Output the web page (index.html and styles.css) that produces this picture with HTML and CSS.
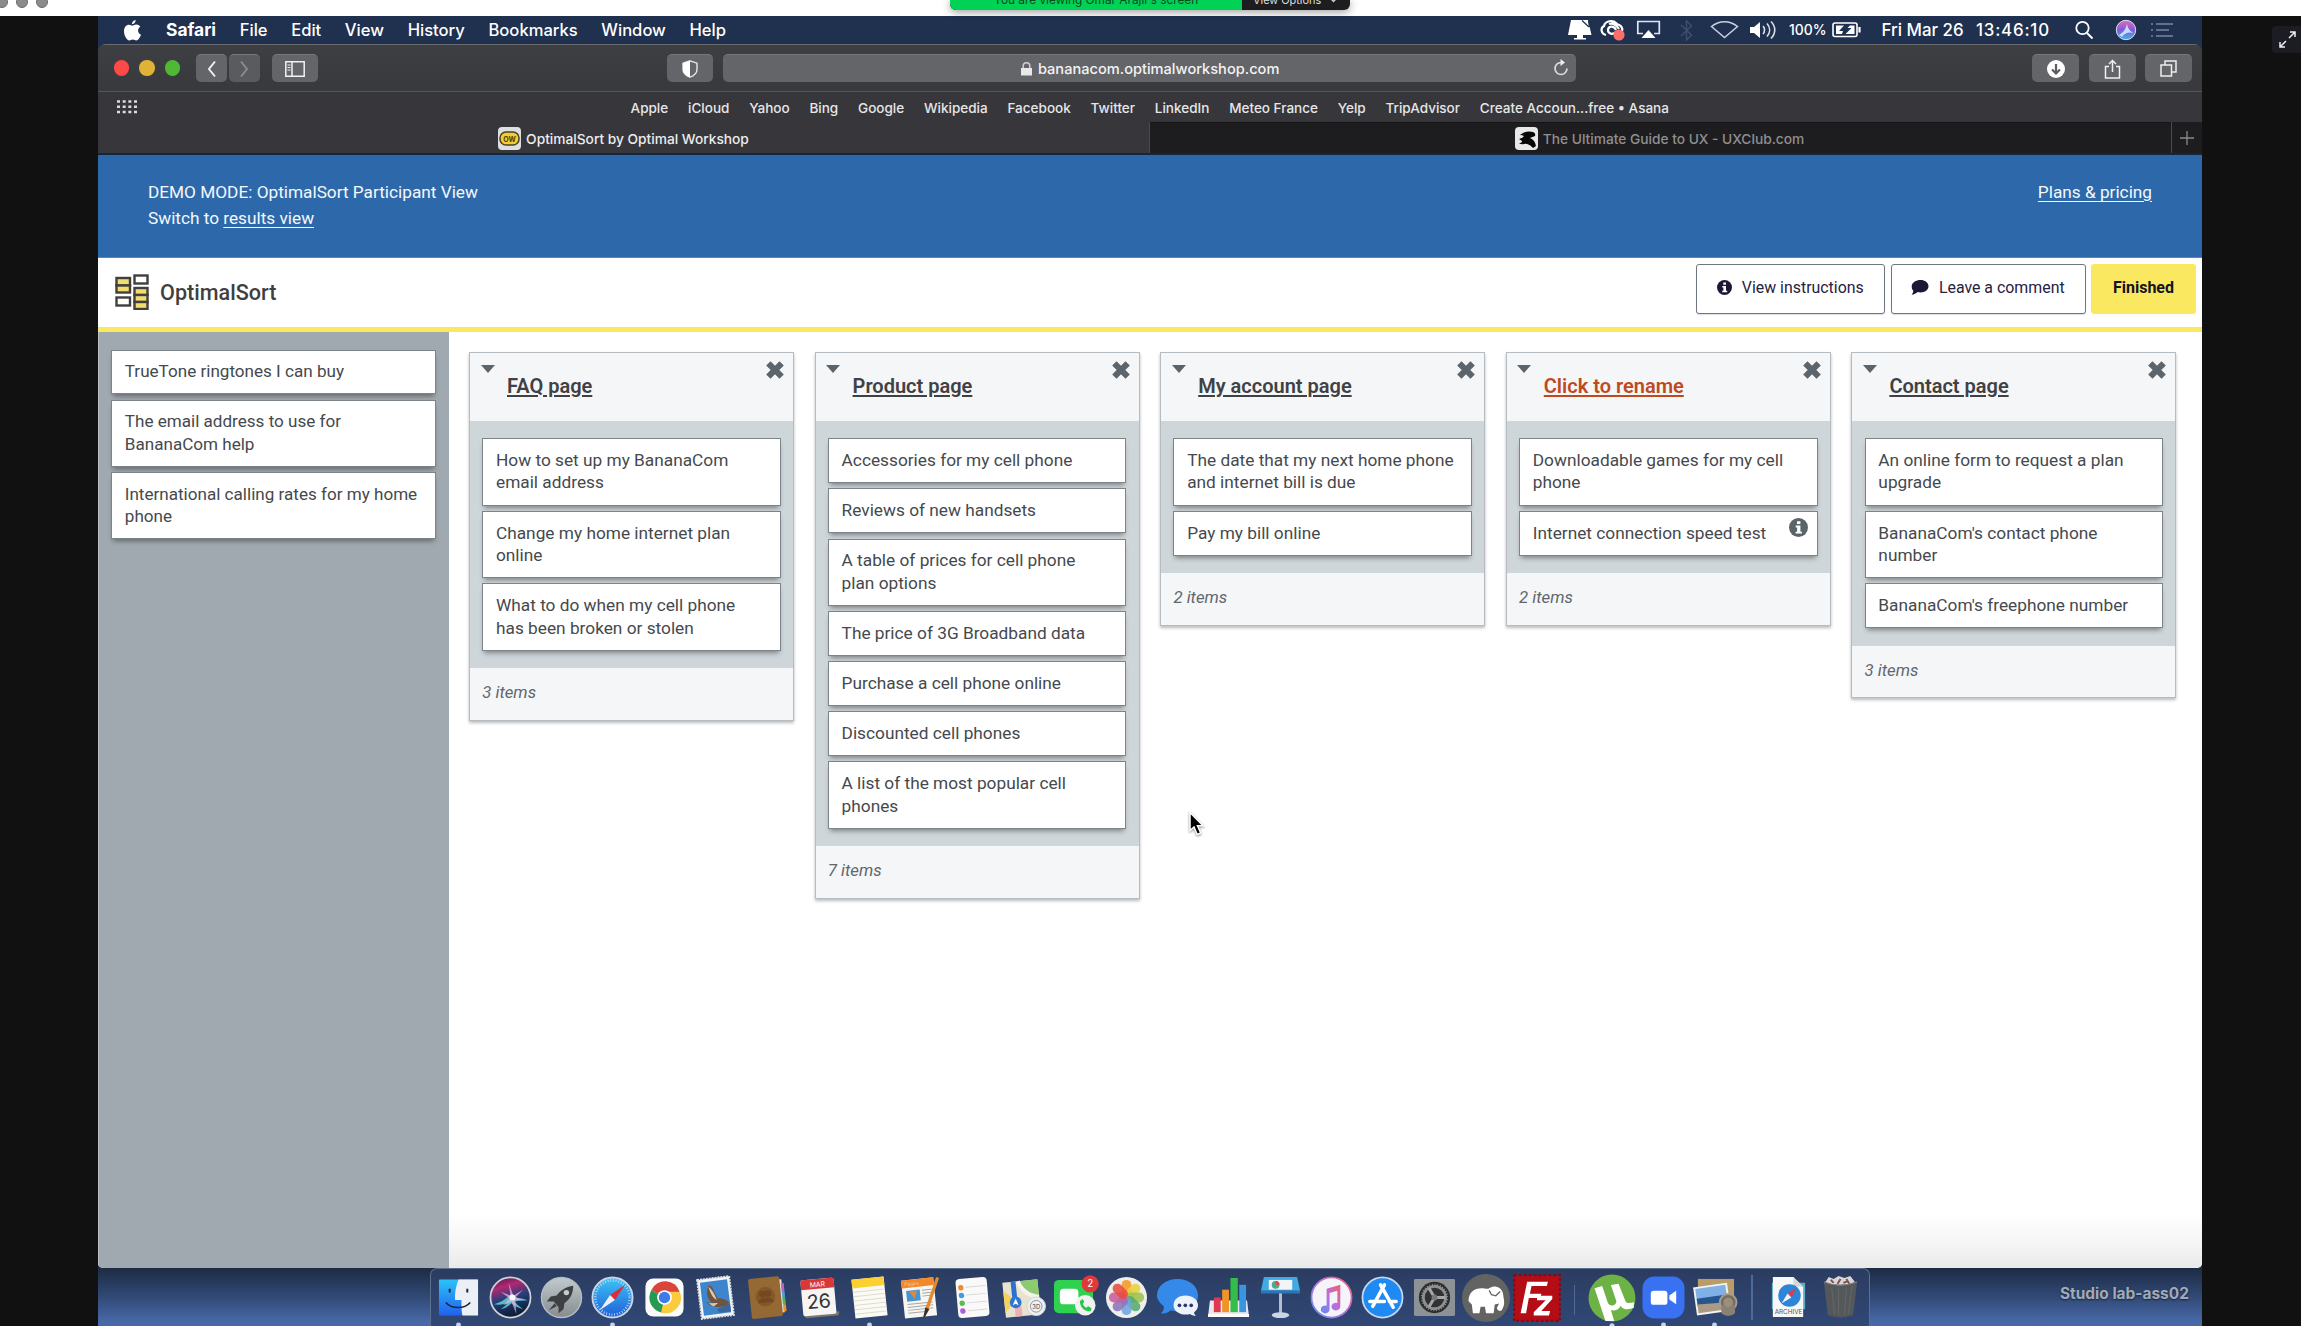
FILE: index.html
```html
<!DOCTYPE html>
<html lang="en">
<head>
<meta charset="utf-8">
<title>OptimalSort by Optimal Workshop</title>
<link rel="stylesheet" href="styles.css">
</head>
<body>
<div class="share-strip">
  <div class="lights"><i></i><i></i><i></i></div>
  <div class="share-pill"><span class="viewing">You are viewing Omar Arajii's screen</span><span class="options">View Options<svg width="9" height="6" viewBox="0 0 9 6"><path d="M1 1l3.500 3.500L8 1" fill="none" stroke="#ccc" stroke-width="1.300"/></svg></span></div>
</div>
<div class="stage">
  <div class="desktop">
    <header class="menubar">
      <svg class="apple" width="17" height="21" viewBox="0 0 17 21"><path d="M11.600 0c.2 2-1.600 4.300-3.700 4.200C7.700 2.300 9.600.200 11.600 0zM8.500 5.700c.8 0 2-1.100 3.900-1.100 1.500 0 3 .8 3.900 2.200-3.300 2-2.700 6.600.7 7.900-.8 2.300-2.800 5.700-4.700 5.700-1.300 0-1.800-.8-3.500-.8s-2.200.8-3.500.8C2.600 20.400 0 15.400 0 11.300c0-4 2.300-6.500 4.900-6.500 1.700 0 2.700.9 3.600.9z" fill="#fff"/></svg>
      <nav class="menus"><b>Safari</b><span>File</span><span>Edit</span><span>View</span><span>History</span><span>Bookmarks</span><span>Window</span><span>Help</span></nav>
      <div class="status">
        <svg width="606" height="28" viewBox="1568 16 606 28" fill="none" stroke="#fff">
          <path d="M1571 20h17l3.500 15h-23.500z" fill="#fff" stroke="none"/><path d="M1582 20.500l7 6.500M1588.500 20.500l1 6.500" stroke="#213050" stroke-width="1.200"/><path d="M1577 35h6v3h3v1.500h-12V38h3z" fill="#fff" stroke="none"/>
          <path d="M1606 35c-5-1-6-7-2-9 1-5 9-7 13-2 4 1 6 4 5 7M1616 30c-2-5-8-4-8 0 0 4 5 5 8 2M1609 24c5-2 8 2 10 5" stroke-width="2.200"/><circle cx="1619" cy="35" r="5.600" fill="#fb6f69" stroke="none"/>
          <path d="M1643 33.500h-5.200V21.500h21.500v12h-5.200" stroke="#e2e6ee" stroke-width="1.700"/><path d="M1648.500 30l7 8h-14z" fill="#fff" stroke="none"/>
          <path d="M1681 25l10.500 10-5 5V21l5 5-10.500 10" stroke="#3f4f72" stroke-width="1.400"/>
          <path d="M1711.500 26.500c7.500-6.500 18.500-6.500 26 0L1724.500 37.500z" stroke="#c8d0df" stroke-width="1.500"/>
          <path d="M1750 27h4l6-5v16l-6-5h-4z" fill="#fff" stroke="none"/><path d="M1763 26c2 2 2 6 0 8M1767 23.500c3.500 4 3.500 9 0 13M1771 21.500c5 5 5 12 0 17" stroke="#dbe0ea" stroke-width="1.600"/>
          <text x="1789" y="34.500" class="menu-text pct">100%</text>
          <rect x="1833" y="23" width="24" height="13.500" rx="2" stroke-width="1.600"/><path d="M1859.500 27v5.500" stroke-width="2.200"/><path d="M1836 25.500h8l-5 5.500h4l-1 3h-6zM1850 25.500h4.500v8.500h-9l6-6h-4z" fill="#fff" stroke="none"/>
          <text x="1881.500" y="36" class="menu-text day">Fri Mar 26</text><text x="1976" y="36" class="menu-text clock">13:46:10</text>
          <circle cx="2082.500" cy="28" r="6.200" stroke-width="1.800"/><path d="M2087 33l5.500 5.500" stroke-width="2"/>
          <circle cx="2126" cy="30" r="9.700" fill="url(#siriSmall)" stroke="#d9dff0" stroke-width="1"/><path d="M2119 35q6-3 8-11 1 6 6 9-7-2-11 4" fill="#cfe9ff" stroke="none" opacity=".9"/>
          <path d="M2151 24h2M2156 24h17M2151 30h2M2156 30h13M2151 36h2M2156 36h17" stroke="#61708f" stroke-width="2"/>
          <defs><linearGradient id="siriSmall" x1="0" y1="0" x2="0" y2="1"><stop stop-color="#e26bb5"/><stop offset=".5" stop-color="#7f5ce0"/><stop offset="1" stop-color="#3fb4e4"/></linearGradient></defs>
        </svg>
      </div>
    </header>

    <section class="window">
      <div class="toolbar">
        <div class="traffic"><i class="red"></i><i class="amber"></i><i class="green"></i></div>
        <div class="tool nav-btn"><svg width="10" height="18" viewBox="0 0 10 18"><path d="M8 1.500L2 9l6 7.500" fill="none" stroke="#eee" stroke-width="2"/></svg></div>
        <div class="tool nav-btn fwd"><svg width="10" height="18" viewBox="0 0 10 18"><path d="M2 1.500L8 9l-6 7.500" fill="none" stroke="#8d8e91" stroke-width="1.800"/></svg></div>
        <div class="tool side-btn"><svg width="20" height="16" viewBox="0 0 20 16" fill="none" stroke="#f2f2f2" stroke-width="1.500"><path d="M.8.800h18.400v14.400H.800zM7 1v14"/><path d="M2.500 4h3M2.500 6.500h3M2.500 9h3" stroke-width="1"/></svg></div>
        <div class="tool shield"><svg width="16" height="18" viewBox="0 0 16 18"><path d="M8 .800l7 2.400v6c0 4-3 6.500-7 8-4-1.500-7-4-7-8v-6z" fill="none" stroke="#e8e8e8" stroke-width="1.400"/><path d="M8 .8v16.400C4 15.700 1 13.200 1 9.200v-6z" fill="#fff"/></svg></div>
        <div class="tool address"><span class="url"><svg width="11" height="14" viewBox="0 0 11 14"><path d="M0 6h11v7.500H0z" fill="#e8e8ea"/><path d="M2.200 6V4a3.300 3.300 0 016.600 0v2" fill="none" stroke="#d0d0d3" stroke-width="1.500"/></svg>bananacom.optimalworkshop.com</span>
          <svg class="reload" width="16" height="18" viewBox="0 0 16 18"><path d="M8 3.500A6 6 0 1014 9.500" fill="none" stroke="#dcdcde" stroke-width="1.700"/><path d="M7.500 0l4.500 3.500L7.500 7z" fill="#eee"/></svg></div>
        <div class="tool act"><svg width="18" height="18" viewBox="0 0 18 18"><circle cx="9" cy="9" r="9" fill="#fff"/><path d="M9 4v9M5 9.500l4 4 4-4" fill="none" stroke="#5b5c60" stroke-width="2.200"/></svg></div>
        <div class="tool act"><svg width="17" height="20" viewBox="0 0 17 20" fill="none" stroke="#f0f0f0" stroke-width="1.500"><path d="M5 7.500H1.500V19h14V7.500H12M8.500 13V1.500M5 5l3.500-3.500L12 5"/></svg></div>
        <div class="tool act"><svg width="17" height="17" viewBox="0 0 17 17" fill="none" stroke="#eee" stroke-width="1.500"><path d="M1 5h10.500v11H1zM5 5V1h11v11h-4.500"/></svg></div>
      </div>
      <div class="favorites">
        <svg class="grid-icon" width="20" height="14" viewBox="0 0 20 14"><path d="M0 1.500h20M0 6.700h20M0 12h20" stroke="#ddd" stroke-width="2.600" stroke-dasharray="3 2.670"/></svg>
        <nav><span>Apple</span><span>iCloud</span><span>Yahoo</span><span>Bing</span><span>Google</span><span>Wikipedia</span><span>Facebook</span><span>Twitter</span><span>LinkedIn</span><span>Meteo France</span><span>Yelp</span><span>TripAdvisor</span><span>Create Accoun...free • Asana</span></nav>
      </div>
      <div class="tabs">
        <div class="tab active"><svg width="23" height="23" viewBox="0 0 23 23"><rect width="23" height="23" rx="4" fill="#dedfe0"/><rect x="2" y="5" width="19" height="13" rx="6" fill="#f3cd35" stroke="#4a4220" stroke-width="1.500"/><text x="11.500" y="14.500" text-anchor="middle" class="ow">OW</text></svg>OptimalSort by Optimal Workshop</div>
        <div class="tab"><svg width="23" height="23" viewBox="0 0 23 23"><rect width="23" height="23" rx="4" fill="#e8e8e8"/><path d="M5 8q6-5 13-3 3 1 2 4l-5 2q5 2 6 8l-3 2q-5-5-9-4-3 1-5-1 3 0 3-2l-3-2q4-1 5-3-2-1-4-1z" fill="#050505"/></svg>The Ultimate Guide to UX - UXClub.com</div>
        <div class="plus"><svg width="14" height="14" viewBox="0 0 14 14"><path d="M7 0v14M0 7h14" stroke="#8a8a8c" stroke-width="1.300"/></svg></div>
      </div>

      <div class="page">
        <div class="demo">
          <div>DEMO MODE: OptimalSort Participant View<br>Switch to <a>results view</a></div>
          <a class="plans">Plans &amp; pricing</a>
        </div>
        <div class="brandbar">
          <svg width="34" height="36" viewBox="0 0 34 36" fill="#fff" stroke="#413f3e" stroke-width="2.400"><rect x="1.500" y="4" width="13.500" height="7.500" fill="#f3dc6e"/><rect x="1.500" y="11.500" width="13.500" height="7" fill="#f3dc6e"/><rect x="1.500" y="23.500" width="13.500" height="8"/><rect x="19.500" y="1.500" width="13" height="8"/><rect x="19.500" y="14" width="13" height="7" fill="#f3dc6e"/><rect x="19.500" y="21" width="13" height="7" fill="#f3dc6e"/><rect x="19.500" y="28" width="13" height="7" fill="#f3dc6e"/></svg>
          <h1>OptimalSort</h1>
          <button class="btn instructions"><svg width="15" height="15" viewBox="0 0 15 15"><circle cx="7.500" cy="7.500" r="7.500" fill="#1b1735"/><path d="M6.300 2.500h2.700v2.200H6.300zM5.300 6h3.700v4.800h1.200v1.500H5.200v-1.500h1.200V7.500H5.300z" fill="#fff"/></svg>View instructions</button>
          <button class="btn comment"><svg width="18" height="15" viewBox="0 0 18 15"><path d="M9.500 0C14 0 17.500 2.700 17.500 6.300S14 12.500 9.500 12.500c-1 0-2-.1-2.800-.4C5 13.700 3 14.600.5 14.700c1-1 1.700-2.300 1.800-4C1 9.500.7 8 .7 6.300.7 2.700 5 0 9.500 0z" fill="#1b1735"/></svg>Leave a comment</button>
          <button class="btn finished">Finished</button>
        </div>
        <div class="workspace">
          <aside class="cards">
            <div class="card">TrueTone ringtones I can buy</div>
            <div class="card">The email address to use for<br>BananaCom help</div>
            <div class="card">International calling rates for my home<br>phone</div>
          </aside>
          <main class="board">
            <section class="group">
              <header><i class="tri"></i><h2>FAQ page</h2><svg class="close" width="20" height="20" viewBox="0 0 18 18"><path d="M3 3l12 12M15 3L3 15"/></svg></header>
              <div class="cards"><div class="card">How to set up my BananaCom<br>email address</div><div class="card">Change my home internet plan<br>online</div><div class="card">What to do when my cell phone<br>has been broken or stolen</div></div>
              <footer>3 items</footer>
            </section>
            <section class="group">
              <header><i class="tri"></i><h2>Product page</h2><svg class="close" width="20" height="20" viewBox="0 0 18 18"><path d="M3 3l12 12M15 3L3 15"/></svg></header>
              <div class="cards"><div class="card">Accessories for my cell phone</div><div class="card">Reviews of new handsets</div><div class="card">A table of prices for cell phone<br>plan options</div><div class="card">The price of 3G Broadband data</div><div class="card">Purchase a cell phone online</div><div class="card">Discounted cell phones</div><div class="card">A list of the most popular cell<br>phones</div></div>
              <footer>7 items</footer>
            </section>
            <section class="group">
              <header><i class="tri"></i><h2>My account page</h2><svg class="close" width="20" height="20" viewBox="0 0 18 18"><path d="M3 3l12 12M15 3L3 15"/></svg></header>
              <div class="cards"><div class="card">The date that my next home phone<br>and internet bill is due</div><div class="card">Pay my bill online</div></div>
              <footer>2 items</footer>
            </section>
            <section class="group">
              <header><i class="tri"></i><h2 class="rename">Click to rename</h2><svg class="close" width="20" height="20" viewBox="0 0 18 18"><path d="M3 3l12 12M15 3L3 15"/></svg></header>
              <div class="cards"><div class="card">Downloadable games for my cell<br>phone</div><div class="card has-info">Internet connection speed test<svg width="19" height="19" viewBox="0 0 15 15"><circle cx="7.500" cy="7.500" r="7.500" fill="#5b6469"/><path d="M6.300 2.500h2.700v2.200H6.300zM5.300 6h3.700v4.800h1.200v1.500H5.200v-1.500h1.200V7.500H5.300z" fill="#fff"/></svg></div></div>
              <footer>2 items</footer>
            </section>
            <section class="group">
              <header><i class="tri"></i><h2>Contact page</h2><svg class="close" width="20" height="20" viewBox="0 0 18 18"><path d="M3 3l12 12M15 3L3 15"/></svg></header>
              <div class="cards"><div class="card">An online form to request a plan<br>upgrade</div><div class="card">BananaCom's contact phone<br>number</div><div class="card">BananaCom's freephone number</div></div>
              <footer>3 items</footer>
            </section>
          </main>
        </div>
      </div>
    </section>

    <div class="dock-area">
      <div class="dock">
        <!-- Finder -->
        <svg viewBox="0 0 44 44"><defs><linearGradient id="fd" x1="0" y1="0" x2="0" y2="1"><stop stop-color="#2cc3f8"/><stop offset="1" stop-color="#2160ef"/></linearGradient></defs><rect x="2" y="3.500" width="40" height="37" rx="1" fill="url(#fd)"/><path d="M22 3.500c-3 8-4 14-3.500 21H25c0 6 0 11 1 16h16v-37z" fill="#eceff6"/><path d="M13 13v4M31 13v4" stroke="#16243a" stroke-width="2"/><path d="M9 27c6 7 19 7 25 0" fill="none" stroke="#16243a" stroke-width="1.600"/><circle class="dot" cx="22" cy="50" r="2.500"/></svg>
        <!-- Siri -->
        <svg viewBox="0 0 44 44"><defs><linearGradient id="si" x1="0" y1="0" x2=".3" y2="1"><stop stop-color="#3b1a4d"/><stop offset=".3" stop-color="#b32773"/><stop offset=".6" stop-color="#243f7a"/><stop offset="1" stop-color="#0e1e3a"/></linearGradient></defs><circle cx="22" cy="22" r="20.500" fill="url(#si)" stroke="#cfd0d8" stroke-width="1.800"/><path d="M5 29q10-3 16-9l2-2q5 6 17 7-12 0-14 1 3 4 9 8-8-2-12-6-5 5-11 6 5-3 7-6-7 2-14 1z" fill="#5fd5d0" opacity=".85"/><path d="M20 7l5 13 10-6-8 8 12 2-12 1 1 14-5-13-8 4 6-7-9-7 10 4z" fill="#f0b4e4" opacity=".7"/><circle cx="24" cy="22" r="3" fill="#fff" opacity=".9"/></svg>
        <!-- Launchpad -->
        <svg viewBox="0 0 44 44"><defs><linearGradient id="lp" x1="0" y1="0" x2="0" y2="1"><stop stop-color="#c2cbcf"/><stop offset="1" stop-color="#868b8e"/></linearGradient></defs><circle cx="22" cy="22" r="20.500" fill="url(#lp)" stroke="#b4bcc0" stroke-width="1.500"/><path d="M34 10c-8 1-13 5-17 10l-6 1-4 5 7 0 5 6 0 6 5-4 1-6c5-4 9-9 9-18z" fill="#3d4144"/><path d="M15 28l-6 7 8-4z" fill="#3d4144"/><circle cx="27" cy="17" r="2.800" fill="#c5ccd0"/></svg>
        <!-- Safari -->
        <svg viewBox="0 0 44 44"><defs><linearGradient id="sf" x1="0" y1="0" x2="0" y2="1"><stop stop-color="#3dc4f6"/><stop offset="1" stop-color="#1f5fd8"/></linearGradient></defs><circle cx="22" cy="22" r="20.500" fill="url(#sf)" stroke="#c9d4e4" stroke-width="2"/><circle cx="22" cy="22" r="17.500" fill="none" stroke="#cfe6fb" stroke-width="2.500" stroke-dasharray=".8 1.950"/><path d="M35 9L24.500 24.500l-5-5z" fill="#dc2e3a"/><path d="M9 35l10.500-15.500 5 5z" fill="#edf0f3"/><circle class="dot" cx="22" cy="50" r="2.500"/></svg>
        <!-- Chrome -->
        <svg viewBox="0 0 44 44"><rect x="2.500" y="2.500" width="39" height="39" rx="8" fill="#fbfbfb"/><path d="M22 22L8.600 14.200A15.600 15.600 0 0137.500 16z" fill="#d9453a"/><path d="M22 22l-13.400-7.800A15.600 15.600 0 0020 37.500z" fill="#259a50"/><path d="M22 22l-3.500 15.300A15.600 15.600 0 0037.500 16H22z" fill="#fbcb3e"/><circle cx="22" cy="22" r="7.500" fill="#fff"/><circle cx="22" cy="22" r="5.800" fill="#3e7bea"/></svg>
        <!-- Mail -->
        <svg viewBox="0 0 44 44"><g transform="rotate(-7 22 22)"><rect x="5.500" y="2" width="33" height="40" fill="#f2f4f6" stroke="#dce2e8" stroke-width="2" stroke-dasharray="2 1"/><rect x="8" y="5" width="28" height="34" fill="#3d86cd"/><path d="M16 9q4 0 5 6l3 8q6 0 12 6l-3 1q3 3 3 5l-7-3q-6 1-12-2-3-1-5-4l6 1q-5-5-4-12z" fill="#6f5440"/><path d="M16 10q5 5 7 15-5-3-7-15zM14 27l10 1-5 3z" fill="#dcc8a8"/><path d="M22 34l14-4v8H24z" fill="#3a659f"/></g></svg>
        <!-- Contacts -->
        <svg viewBox="0 0 44 44"><g transform="rotate(-6 22 22)"><path d="M36 5h3v34h-3z" fill="#e8e5df"/><path d="M38 9h3v8h-3z" fill="#b66ac4"/><path d="M38 17h3v7h-3z" fill="#4f9fe2"/><path d="M38 24h3v7h-3z" fill="#53b74c"/><path d="M38 31h3v7h-3z" fill="#f0952e"/><rect x="5" y="1.500" width="32" height="41" rx="2" fill="#956933"/><circle cx="21" cy="21" r="10" fill="#84592a"/><circle cx="18" cy="18" r="3.500" fill="#74491f"/><circle cx="24" cy="18" r="3.500" fill="#74491f"/><path d="M13 27q1-5 8-5t8 5z" fill="#74491f"/></g></svg>
        <!-- Calendar -->
        <svg viewBox="0 0 44 44"><g transform="rotate(-5 22 22)"><path d="M5 39l3 3h33l1-4z" fill="#7c766d"/><rect x="5" y="3" width="34" height="37" rx="2" fill="#f6f5f3"/><path d="M5 5q0-2 2-2h30q2 0 2 2v8H5z" fill="#da3838"/><text x="22" y="11" class="mar">MAR</text><text x="22" y="33" class="date">26</text></g></svg>
        <!-- Notes -->
        <svg viewBox="0 0 44 44"><g transform="rotate(-6 22 22)"><rect x="5.500" y="2" width="33" height="40" fill="#fbfaf3"/><rect x="5.500" y="2" width="33" height="9" fill="#fdd031"/><path d="M6 15h32M6 19.500h32M6 24h32M6 28.500h32M6 33h32M6 37.500h32" stroke="#d5d4cd" stroke-width=".8"/></g><circle class="dot" cx="22" cy="50" r="2.500"/></svg>
        <!-- Pages -->
        <svg viewBox="0 0 44 44"><g transform="rotate(-6 20 22)"><rect x="4" y="3" width="33" height="39" fill="#f7f6f2"/><rect x="4" y="3" width="33" height="8" fill="#f2892b"/><text x="7" y="9" class="tiny">Pages</text><rect x="8" y="14" width="14" height="11" fill="#4495d2"/><path d="M11 15h8l-3 8z" fill="#e88532"/><path d="M24 15h10M24 18h10M24 21h10M8 28h26M8 31h26M8 34h26M8 37h20" stroke="#a6a6a4"/></g><path d="M38 1l3 1-11 33-4 7-1-1 2-8z" fill="#e28b31"/><path d="M27 32l4 2-5 9-1-1z" fill="#333"/></svg>
        <!-- Reminders -->
        <svg viewBox="0 0 44 44"><g transform="rotate(-5 22 22)"><rect x="6" y="2" width="32" height="40" rx="4" fill="#f9f9fa"/><path d="M16 11h20M16 19h20M16 27h20M16 35h20" stroke="#d8d8dc"/><circle cx="11" cy="11" r="2.800" fill="#f08a2c"/><circle cx="11" cy="19" r="2.800" fill="#3c9de9"/><circle cx="11" cy="27" r="2.800" fill="#63b951"/><circle cx="11" cy="35" r="2.800" fill="#b45bd8"/></g></svg>
        <!-- Maps -->
        <svg viewBox="0 0 44 44"><g transform="rotate(-6 20 22)"><rect x="2" y="5" width="36" height="36" fill="#e7e3cf"/><path d="M16 5h22v22z" fill="#8ccb6f"/><path d="M2 14l12 10-12 12z" fill="#f4d35f"/><path d="M18 5q4 15 20 18" fill="none" stroke="#f5f3ec" stroke-width="4"/><path d="M13 5v22" stroke="#2c71ce" stroke-width="5"/><rect x="12" y="31" width="7" height="10" fill="#efb0b5"/></g><circle cx="14" cy="27" r="6" fill="#2e76d4"/><path d="M14 23l3 7-3-1.500L11 30z" fill="#fff"/><circle cx="35" cy="31" r="9.500" fill="#eef0f2" stroke="#cfd3d8"/><circle cx="35" cy="31" r="6" fill="none" stroke="#8d959e"/><text x="35" y="33.500" class="td">3D</text></svg>
        <!-- FaceTime -->
        <svg viewBox="0 0 44 44"><rect x="1" y="4" width="40" height="34" rx="5" fill="#2fd150"/><rect x="7" y="13" width="19" height="16" rx="4" fill="#fff"/><circle cx="33" cy="30" r="10.500" fill="#f0f2f2"/><path d="M27.500 25.500c0 7 5 11 11 10.500l1-3-3.500-2-2 1.500c-2-1-3-2.500-3.500-4l1.500-2-1.500-3z" fill="#28c64a"/><circle cx="38" cy="8" r="8.800" fill="#e0383b"/><text x="38" y="11.500" class="badge">2</text></svg>
        <!-- Photos -->
        <svg viewBox="0 0 44 44"><circle cx="22" cy="22" r="21" fill="#eeeeea"/><g transform="translate(22 22)"><rect x="-5" y="-18" width="10" height="18" rx="5" fill="#f59a2b" opacity=".9"/><rect x="-5" y="-18" width="10" height="18" rx="5" fill="#e6d33c" opacity=".88" transform="rotate(45)"/><rect x="-5" y="-18" width="10" height="18" rx="5" fill="#9dc24d" opacity=".88" transform="rotate(90)"/><rect x="-5" y="-18" width="10" height="18" rx="5" fill="#58aa72" opacity=".88" transform="rotate(135)"/><rect x="-5" y="-18" width="10" height="18" rx="5" fill="#71a5dd" opacity=".88" transform="rotate(180)"/><rect x="-5" y="-18" width="10" height="18" rx="5" fill="#8b75bf" opacity=".88" transform="rotate(225)"/><rect x="-5" y="-18" width="10" height="18" rx="5" fill="#c85d99" opacity=".88" transform="rotate(270)"/><rect x="-5" y="-18" width="10" height="18" rx="5" fill="#e84b3f" opacity=".88" transform="rotate(315)"/></g></svg>
        <!-- Messages -->
        <svg viewBox="0 0 44 44"><path d="M22 3c12 0 21 7 21 17S34 36 22 36c-3 0-5 0-7-1-3 3-7 4-10 3 3-2 3-4 3-7-4-3-7-7-7-11C1 10 10 3 22 3z" fill="#3489e9"/><path d="M30 20c7 0 13 4 13 10 0 3-2 6-4 7 0 2 1 3 2 4-3 0-5-1-6-2-9 2-17-2-17-9 0-6 5-10 12-10z" fill="#eef3fb"/><circle cx="24" cy="30" r="1.900" fill="#2c3b69"/><circle cx="30" cy="30" r="1.900" fill="#2c3b69"/><circle cx="36" cy="30" r="1.900" fill="#2c3b69"/></svg>
        <!-- Numbers -->
        <svg viewBox="0 0 44 44"><path d="M3 25h38l2 17H1z" fill="#e9e9ec"/><rect x="7" y="22" width="7" height="15" fill="#df3852"/><rect x="15.500" y="14" width="7" height="23" fill="#f09328"/><rect x="24" y="2" width="7.500" height="35" fill="#34bd4a"/><rect x="33" y="9" width="7" height="28" fill="#3a95e1"/><path d="M1 39h42v3H1z" fill="#fbfbfb"/></svg>
        <!-- Keynote -->
        <svg viewBox="0 0 44 44"><path d="M20.500 17h3v23h-3z" fill="#b5c3d1"/><ellipse cx="22" cy="40" rx="9" ry="3" fill="#c9d7e2"/><path d="M5 1h34l3 14H2z" fill="#43a9e4"/><path d="M2 15h40v3H2z" fill="#2a76b7"/><rect x="10" y="4" width="24" height="10" fill="#f1f5f7"/><circle cx="17" cy="9" r="4" fill="#4aa893"/><path d="M17 9V5a4 4 0 014 4z" fill="#db4b48"/></svg>
        <!-- iTunes -->
        <svg viewBox="0 0 44 44"><defs><linearGradient id="it" x1="0" y1="1" x2="1" y2="0"><stop stop-color="#5a8ff0"/><stop offset=".5" stop-color="#b86fe0"/><stop offset="1" stop-color="#f1606f"/></linearGradient></defs><circle cx="22" cy="22" r="20.500" fill="#f5f4f8" stroke="url(#it)" stroke-width="1.800"/><path d="M17 13l14-4v22a4.500 4 0 11-3-3.500V15l-8 2.500V34a4.500 4 0 11-3-3.500z" fill="url(#it)"/></svg>
        <!-- App Store -->
        <svg viewBox="0 0 44 44"><circle cx="22" cy="22" r="20.500" fill="#1f8af2" stroke="#c4d8f0" stroke-width="1.800"/><path d="M24 9L12 31M20 9l13 23M9 26h15M29 26h7" stroke="#fff" stroke-width="3.600" stroke-linecap="round"/></svg>
        <!-- System Preferences -->
        <svg viewBox="0 0 44 44"><rect x="1" y="3" width="42" height="38" rx="1.500" fill="#8c9296"/><circle cx="22" cy="22" r="16" fill="#2f3133"/><circle cx="22" cy="22" r="14" fill="#8f9091" stroke="#2b2c2d" stroke-width="2.500" stroke-dasharray="1.800 1.100"/><circle cx="22" cy="22" r="10" fill="#303234"/><path d="M22 22h11M22 22l-5.500-9.500M22 22l-5.500 9.500" stroke="#a6a7a8" stroke-width="3"/><circle cx="22" cy="22" r="3" fill="#77797b"/></svg>
        <!-- MAMP -->
        <svg viewBox="0 0 44 44" class="big"><circle cx="22" cy="22" r="22" fill="#636363"/><path d="M6 25c0-8 5-12 12-12 3 0 5 1 7 0 6-4 13 0 13 8 1 4 1 8-1 11-1 3-5 2-5-1l2-4-4 1-1 8h-7l-1-6h-4l-1 6h-6l-1-8-2-2z" fill="#fff"/><path d="M25 15l2 4 4 1 4-4" fill="none" stroke="#636363" stroke-width="1.200"/></svg>
        <!-- FileZilla -->
        <svg viewBox="0 0 44 44" class="big"><rect x="1" y="1" width="42" height="42" fill="#b40d16" stroke="#850a12" stroke-width="2" stroke-dasharray="2.500 2"/><path d="M13 7h19l-1 4H17l-1.500 7H26l-1 4H14.500L12 36H7z" fill="#fff"/><path d="M22 20h14v3L26 34h8l-1 4H19v-3l11-11h-8z" fill="#fff"/></svg>
        <i class="divider"></i>
        <!-- uTorrent -->
        <svg viewBox="0 0 44 44" class="big"><circle cx="22" cy="22" r="21.500" fill="#6db244"/><path d="M6 13l7-2 5 15c2 5 8 3 8-1l-5-15 7-1 6 15c1 3 3 3 8 2v5c-5 2-10 2-12-2-2 4-6 5-9 4l3 10h-8z" fill="#fff"/><circle class="dot" cx="22" cy="47.500" r="2.300"/></svg>
        <!-- Zoom -->
        <svg viewBox="0 0 44 44"><rect x=".500" y=".500" width="43" height="43" rx="12" fill="#3871f2"/><rect x="9" y="15" width="17" height="14.500" rx="3" fill="#fff"/><path d="M28 20l7-5v14l-7-5z" fill="#fff"/><circle class="dot" cx="22" cy="50" r="2.500"/></svg>
        <!-- Preview -->
        <svg viewBox="0 0 44 44"><rect x="5" y="3" width="37" height="30" fill="#b99d69"/><g transform="rotate(-8 20 24)"><rect x="2" y="9" width="35" height="29" fill="#f2f2ee"/><rect x="4" y="11" width="31" height="12" fill="#7fb1e8"/><rect x="4" y="21" width="31" height="8" fill="#27568d"/><path d="M4 27l31 2v7H4z" fill="#ab9a85"/></g><circle cx="36" cy="27" r="8.500" fill="#756c62" stroke="#a29c92" stroke-width="2"/><path d="M29 30h14v8q-7 6-14 0z" fill="#8b8172"/><circle cx="36" cy="27" r="5" fill="#9a8f7b"/><circle class="dot" cx="22" cy="50" r="2.500"/></svg>
        <i class="divider tall"></i>
        <!-- Archive -->
        <svg viewBox="0 0 44 44"><path d="M5 7h34v27H5z" fill="#5caec9"/><path d="M6 1h21l10 10v31H6z" fill="#f7f7f7"/><path d="M27 1v10h10z" fill="#d4d7da"/><circle cx="23" cy="20" r="11.500" fill="#2c84db"/><path d="M30 12l-5 10-4-4z" fill="#e23c3c"/><path d="M15 28l6-10 4 4z" fill="#f2f2f2"/><text x="22" y="39" class="arch">ARCHIVE</text></svg>
        <!-- Trash -->
        <svg viewBox="0 0 44 44"><path d="M6 7l4-6 5 2 5-3 6 2 6-2 4 5 2 5-15 3z" fill="#d8d6d6"/><path d="M12 4l3 3M22 3l-3 5M28 3l3 5M25 7l5-2" stroke="#834e50" stroke-width="2"/><path d="M5 6q16 6 34 0l-4 34q-13 5-26 0z" fill="#55585b"/><path d="M13 12l3 27M20 12v28M28 12l-2 28M34 10l-4 29" stroke="#64676a"/><path d="M5 6q16 7 34 0" fill="none" stroke="#85888b"/></svg>
      </div>
      <span class="host">Studio lab-ass02</span>
    </div>
    <svg class="cursor" width="19" height="26" viewBox="0 0 19 26"><path d="M2 1.500v18l4-3.500 3.200 7.500 3.500-1.500-3.200-7.300h5.500z" fill="#000" stroke="#fff" stroke-width="1.500"/></svg>
  </div>
  <div class="expand"><svg width="17" height="17" viewBox="0 0 17 17" fill="none" stroke="#eee" stroke-width="1.500"><path d="M10 7l6-6M11 1h5v5M7 10l-6 6M1 11v5h5"/></svg></div>
</div>
</body>
</html>
```
FILE: styles.css
```css
* { box-sizing: border-box; }
body { margin: 0; width: 2301px; height: 1326px; overflow: hidden; background: #111; font-family: Roboto, "Liberation Sans", sans-serif; }
i { font-style: normal; }
svg { flex: none; display: block; }

/* Screen-share strip, scrolled partly past the top edge */
.share-strip { height: 16px; background: #fff; display: flex; }
.lights { display: flex; gap: 8px; width: 950px; margin-left: -4px; }
.lights i { width: 12px; height: 12px; margin-top: -4px; border-radius: 50%; background: #8b8b8b; border: 1px solid #6c6c6c; }
.share-pill { position: relative; z-index: 2; display: flex; width: 400px; height: 10px; margin-left: 4px; border-radius: 0 0 6px 6px; background: #1d1d20; overflow: hidden; box-shadow: 0 2px 8px #0006; font: 11.800px/16px Inter, sans-serif; }
.viewing { width: 292px; height: 18px; margin-top: -8px; background: #00d256; color: #074a22; text-align: center; }
.options { flex: 1; display: flex; gap: 8px; align-items: center; height: 16px; margin-top: -8px; padding-left: 11px; color: #ddd; font-size: 10.900px; }

.stage { display: flex; height: 1310px; padding-left: 98px; }
.desktop { position: relative; width: 2104px; display: flex; flex-direction: column; background: #20304f; }
.expand { width: 29px; height: 27px; margin: 10px 0 0 70px; background: #1c1c24; border-radius: 4px 0 0 4px; display: flex; align-items: center; padding-left: 7px; }

/* macOS menu bar */
.menubar { height: 28px; background: #20304f; display: flex; align-items: center; color: #fff; font: 500 16.600px/28px Inter, sans-serif; }
.apple { margin-left: 26px; }
.menus { display: flex; gap: 23.600px; margin-left: 25px; }
.menus b { font-size: 17.400px; }
.status { margin-left: auto; margin-right: 28px; }
.menu-text { fill: #fff; stroke: none; font: 500 16.900px Inter, sans-serif; }
.menu-text.pct { font-size: 13.900px; }
.menu-text.clock { letter-spacing: .8px; }

/* Safari window */
.window { height: 1224px; border-radius: 8px 8px 5px 5px; overflow: hidden; background: #38393d; display: flex; flex-direction: column; font-family: Inter, sans-serif; position: relative; z-index: 1; }
.toolbar { height: 48px; flex: none; border-top: 1px solid #6a6b6e; border-bottom: 1px solid #55565a; background: linear-gradient(#3e3f43, #38393c); display: flex; align-items: center; padding-left: 16px; }
.traffic { display: flex; gap: 10px; width: 82.500px; }
.traffic i { width: 15.400px; height: 15.400px; border-radius: 50%; }
.red { background: #fb4a48; }
.amber { background: #e0b337; }
.green { background: #4fb933; }
.tool { height: 28px; border-radius: 5px; background: #646569; border-top: 1px solid #77787b; display: flex; align-items: center; justify-content: center; }
.nav-btn { width: 31px; margin-right: 1.500px; }
.fwd { background: #5a5b5f; }
.side-btn { width: 46px; margin-left: 10.500px; }
.shield { width: 46px; margin-left: 349px; }
.address { width: 854px; margin: 0 456px 0 10.500px; position: relative; font-weight: 500; font-size: 14.600px; color: #f3f3f3; }
.url { display: flex; gap: 6px; align-items: center; margin-left: 1px; padding-top: 1px; }
.reload { position: absolute; right: 7px; top: 4px; }
.act { width: 47px; margin-right: 9.700px; }
.favorites { height: 30px; flex: none; display: flex; align-items: center; color: #e6e6e8; font-weight: 500; font-size: 13.520px; background: #37373b; }
.grid-icon { margin-left: 18.500px; }
.favorites nav { flex: 1; display: flex; gap: 19.800px; justify-content: center; margin-right: 39px; white-space: nowrap; padding-top: 1px; }
.tabs { height: 33px; flex: none; display: flex; border-bottom: 2px solid #11263f; color: #ececee; font-weight: 500; font-size: 13.740px; background: #37373b; }
.tab { width: 1021px; background: #1d1d1f; display: flex; align-items: center; justify-content: center; gap: 5px; color: #8f8f91; border-top: 1px solid #151517; padding: 1px 2px 0 0; }
.tab.active { width: 1052px; background: none; color: #ececee; border-top-color: transparent; border-right: 1px solid #4a4a4d; padding-right: 0; }
.ow { font: 700 7px Inter, sans-serif; fill: #4a3c08; }
.plus { flex: 1; background: #1d1d1f; border-left: 1px solid #4a4a4d; display: flex; align-items: center; justify-content: center; }

/* OptimalSort page */
.page { flex: 1; display: flex; flex-direction: column; background: #fff; font-family: Roboto, sans-serif; }
.demo { height: 103px; flex: none; background: #2d69aa; border-bottom: 1px solid #5d84af; color: #f4f8fc; display: flex; justify-content: space-between; padding: 24px 50px 0 50px; font-size: 17.230px; line-height: 26.400px; }
.demo a { text-decoration: underline; text-underline-offset: 3px; }
.brandbar { height: 74px; flex: none; border-bottom: 5px solid #fae960; display: flex; align-items: center; padding: 0 6px 1px 17px; color: #3f3f40; }
.brandbar h1 { margin: 0 auto 0 11px; font-size: 21.600px; font-weight: 500; }
.btn { height: 50px; margin: -6px 0 0 5.500px; padding: 0 0 3px; display: flex; align-items: center; justify-content: center; gap: 9.500px; border: 1.500px solid #6d7580; border-radius: 3px; background: #fff; color: #27223d; font: 450 15.900px Roboto, sans-serif; box-shadow: 0 1px 1px #0002; }
.instructions { width: 189px; }
.comment { width: 195px; }
.finished { width: 105px; background: #fae960; border: 0; box-shadow: none; color: #15131e; font-weight: 700; font-size: 16px; }

.workspace { flex: 1; display: flex; }
.workspace aside { width: 350.500px; background: #a0a9af; padding: 17.500px 12.800px 0 12px; border-left: 1px solid #b8c0c4; }
.cards { display: flex; flex-direction: column; gap: 5.300px; }
.card { border: 1px solid #7d8489; background: #fff; padding: 9.700px 12.800px 10.700px; font-size: 17.280px; line-height: 22.450px; color: #45494d; white-space: nowrap; box-shadow: 0 4px 5px -2px #0006; }
aside .card { font-size: 17.080px; }
.board { flex: 1; display: flex; align-items: flex-start; gap: 20.600px; padding: 19.700px 0 0 20.500px; background: linear-gradient(#fff 0 880px, #f7f6f7 910px, #eae9ea 937px); }
.group { width: 325px; border: 1.500px solid #b5bdc3; background: #f5f6f8; box-shadow: 0 2px 3px #0004; }
.group header { height: 68px; display: flex; align-items: flex-start; padding: 0 8px 0 10.500px; }
.tri { border: 7.500px solid transparent; border-top: 8.500px solid #5b646a; border-bottom: 0; margin-top: 12.500px; }
.group h2 { margin: 21px auto 0 12.500px; font-size: 20px; line-height: 25px; font-weight: 600; color: #3f4144; text-decoration: underline; text-underline-offset: 2px; text-decoration-thickness: 1.500px; }
.group h2.rename { color: #bf4a1e; }
.close { margin-top: 7px; }
.close path { stroke: #5c656b; stroke-width: 5.500px; }
.group > .cards { background: #cfd6d9; padding: 17.600px 12.200px; }
.has-info { display: flex; justify-content: space-between; padding-right: 9px; }
.has-info svg { margin-top: -3.500px; }
.group footer { height: 51.500px; padding: 13px 12.200px; font-size: 16.800px; line-height: 23px; font-style: italic; color: #5f676e; }

/* Dock */
.dock-area { height: 58px; display: flex; background: linear-gradient(#1d2b44, #324b78 30px, #4868a8 54px); }
.dock { width: 1440px; margin-left: 332px; background: linear-gradient(#2b3c60, #304876); border: 1.500px solid #5b6f8e; border-bottom: 0; border-radius: 7px 7px 0 0; display: flex; align-items: center; gap: 8.350px; padding-left: 6.300px; }
.dock svg { width: 43px; height: 43px; overflow: visible; }
.dock svg.big { width: 48px; height: 48px; margin: 0 -2.500px; }
.dot { fill: #c3d3ee; }
.divider { width: 1.500px; height: 30px; background: #4d6a9b; margin: 4px 7px 0; }
.divider.tall { height: 45px; margin: 0 6.400px; }
.host { margin-left: 190px; padding-top: 15px; font: 700 15.450px/22px Inter, sans-serif; color: #a2a9b8; text-shadow: 0 1px 2px #0008; white-space: nowrap; }
.dock text { text-anchor: middle; font-family: Inter, sans-serif; }
.mar { font-size: 7px; fill: #fff; }
.date { font-size: 20px; fill: #333; }
.dock .tiny { font-size: 5px; fill: #fbc68e; text-anchor: start; }
.td { font-size: 6px; fill: #444; }
.badge { font-size: 10px; fill: #fff; }
.arch { font-size: 6.500px; fill: #555; }
.cursor { position: absolute; z-index: 2; left: 1090px; top: 795px; filter: drop-shadow(0 1px 1px #0007); }
```
